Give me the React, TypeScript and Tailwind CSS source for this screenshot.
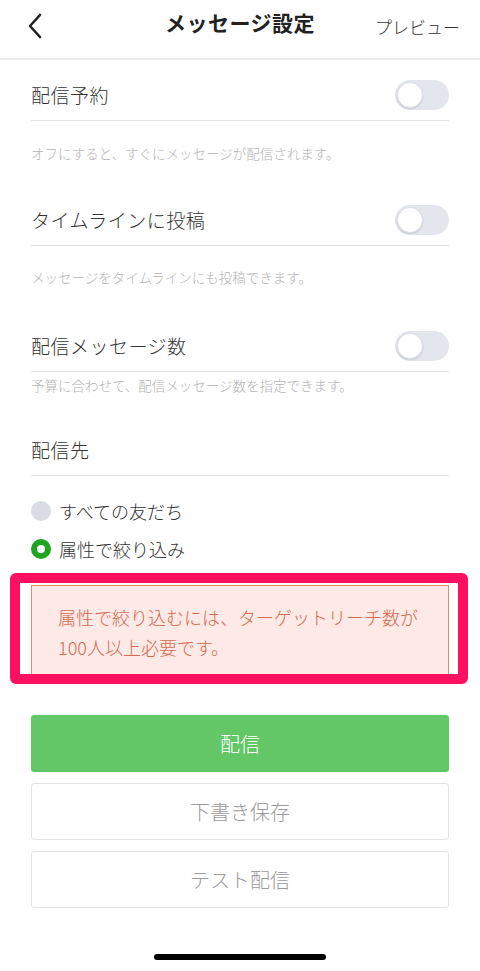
import React from 'react';

const font = { fontFamily: '"Noto Sans CJK JP", "Noto Sans", sans-serif' };

function Toggle() {
  return (
    <div className="w-[54px] h-[30px] rounded-full bg-[#e3e6ed] p-[2px] flex items-center">
      <div className="w-[26px] h-[26px] rounded-full bg-white border border-[#dcdfe5] shadow-[0_1px_2px_rgba(0,0,0,0.12)]" />
    </div>
  );
}

function SettingRow({ label, toggle = true }: { label: string; toggle?: boolean }) {
  return (
    <div className="h-[61px] pt-[10px] flex items-center justify-between border-b border-[#e3e3e3]">
      <span className="text-[19px] font-light text-[#333333] tracking-[0.5px]">{label}</span>
      {toggle && <Toggle />}
    </div>
  );
}

function Helper({ text, className }: { text: string; className: string }) {
  return <p className={`text-[13.5px] font-light leading-[20px] text-[#b4b4b4] ${className}`}>{text}</p>;
}

export default function App() {
  return (
    <div className="w-[480px] h-[971px] bg-white relative overflow-hidden" style={font}>
      {/* header */}
      <div className="h-[60px] flex items-center justify-between border-b-2 border-[#ececec] pl-[26px] pr-[20px] relative">
        <svg width="18" height="26" viewBox="0 0 18 26" className="mb-[6px]">
          <path d="M14 2 L4 13 L14 24" fill="none" stroke="#222" strokeWidth="2.6" strokeLinecap="round" strokeLinejoin="round" />
        </svg>
        <h1 className="absolute left-1/2 -translate-x-1/2 top-[7px] text-[21px] font-bold text-[#222] tracking-[0.5px]">
          メッセージ設定
        </h1>
        <span className="text-[17px] font-light text-[#333] mb-[4px]">プレビュー</span>
      </div>

      <div className="px-[31px]">
        <SettingRow label="配信予約" />
        <Helper text="オフにすると、すぐにメッセージが配信されます。" className="pt-[22px] pb-[22px]" />
        <SettingRow label="タイムラインに投稿" />
        <Helper text="メッセージをタイムラインにも投稿できます。" className="pt-[21px] pb-[24px]" />
        <SettingRow label="配信メッセージ数" />
        <Helper text="予算に合わせて、配信メッセージ数を指定できます。" className="pt-[3px] pb-[20px]" />
        <SettingRow label="配信先" toggle={false} />

        <div className="pt-[24px] flex flex-col gap-[16px]">
          <label className="h-[22px] flex items-center gap-[8px]">
            <span className="w-[20px] h-[20px] rounded-full bg-[#d9dce4]" />
            <span className="text-[18px] font-light text-[#333]">すべての友だち</span>
          </label>
          <label className="h-[22px] flex items-center gap-[8px]">
            <span className="w-[20px] h-[20px] rounded-full bg-[#1fa51f] flex items-center justify-center">
              <span className="w-[8px] h-[8px] rounded-full bg-white" />
            </span>
            <span className="text-[18px] font-light text-[#333]">属性で絞り込み</span>
          </label>
        </div>

        {/* notice with highlight frame */}
        <div className="relative mt-[25px]">
          <div className="border border-[#dd8c7a] bg-[#fde9e6] px-[26px] py-[16px] text-[18px] font-light leading-[30px] text-[#d46a4e]">
            属性で絞り込むには、ターゲットリーチ数が
            <br />
            100人以上必要です。
          </div>
          <div className="absolute -left-[21px] -top-[12px] -right-[19px] -bottom-[5px] border-[10px] border-[#fe1060] rounded-[6px] pointer-events-none" />
        </div>

        <div className="mt-[36px] flex flex-col gap-[11px]">
          <button className="h-[57px] rounded-[3px] bg-[#63c768] text-white font-light text-[20px]">配信</button>
          <button className="h-[57px] rounded-[3px] border border-[#e3e3e3] bg-white text-[#9a9a9a] font-light text-[20px]">下書き保存</button>
          <button className="h-[57px] rounded-[3px] border border-[#e3e3e3] bg-white text-[#9a9a9a] font-light text-[20px]">テスト配信</button>
        </div>
      </div>

      <div className="absolute left-[154px] bottom-[11px] w-[172px] h-[6px] rounded-full bg-black" />
    </div>
  );
}
